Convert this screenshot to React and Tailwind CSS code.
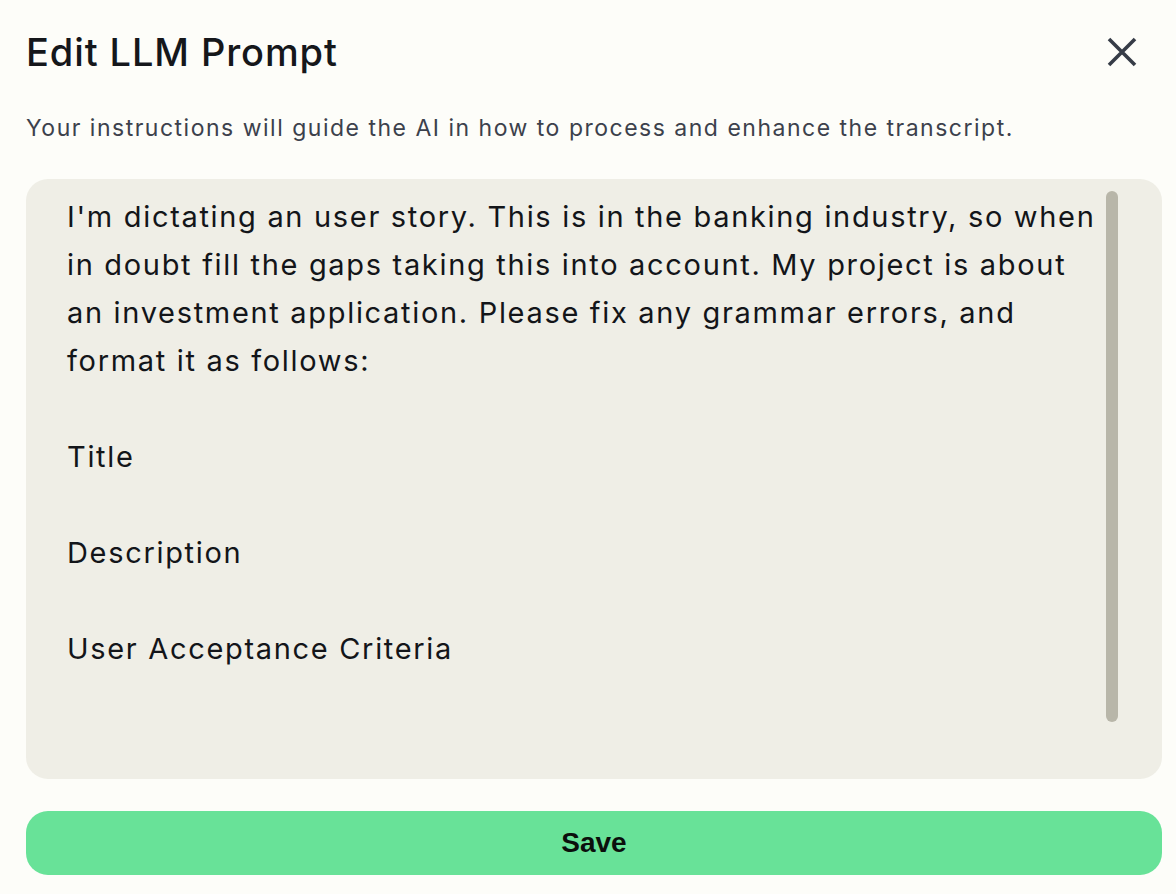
const promptText = [
  "I'm dictating an user story. This is in the banking industry, so when",
  "in doubt fill the gaps taking this into account. My project is about",
  "an investment application. Please fix any grammar errors, and",
  "format it as follows:",
  "",
  "Title",
  "",
  "Description",
  "",
  "User Acceptance Criteria",
];

const CloseIcon = () => (
  <svg width="32" height="32" viewBox="0 0 32 32" fill="none">
    <path d="M3 3 L29 29 M29 3 L3 29" stroke="#363c47" strokeWidth="3.6" />
  </svg>
);

export default function App() {
  return (
    <div className="min-h-[894px] w-full bg-[#fdfdf9] pl-[26px] pr-[14px] pt-[28px] font-['Inter',sans-serif]">
      {/* Header */}
      <div className="flex items-center justify-between h-[48px]">
        <h1 className="text-[38px] font-medium text-[#15171b] tracking-[0.9px]">Edit LLM Prompt</h1>
        <button className="mr-[24px] flex items-center justify-center">
          <CloseIcon />
        </button>
      </div>

      <p className="mt-[38px] text-[23px] leading-[28px] text-[#3c414c] tracking-[1.5px]">
        Your instructions will guide the AI in how to process and enhance the transcript.
      </p>

      {/* Prompt editor */}
      <div className="relative mt-[37px] h-[600px] rounded-[22px] bg-[#efeee6] overflow-hidden">
        <div className="pl-[41px] pt-[14px] text-[29px] leading-[48px] text-[#131519] tracking-[1.68px] whitespace-pre">
          {promptText.map((line, i) => (
            <div key={i} className="h-[48px]">{line}</div>
          ))}
        </div>
        <div className="absolute right-[44px] top-[12px] h-[531px] w-[12px] rounded-full bg-[#b8b6a9]" />
      </div>

      <button className="mt-[32px] w-full h-[64px] rounded-[22px] bg-[#68e298] text-[28px] font-bold text-[#0b0f0c] font-['Liberation_Sans',Arial,sans-serif]">
        Save
      </button>
    </div>
  );
}
